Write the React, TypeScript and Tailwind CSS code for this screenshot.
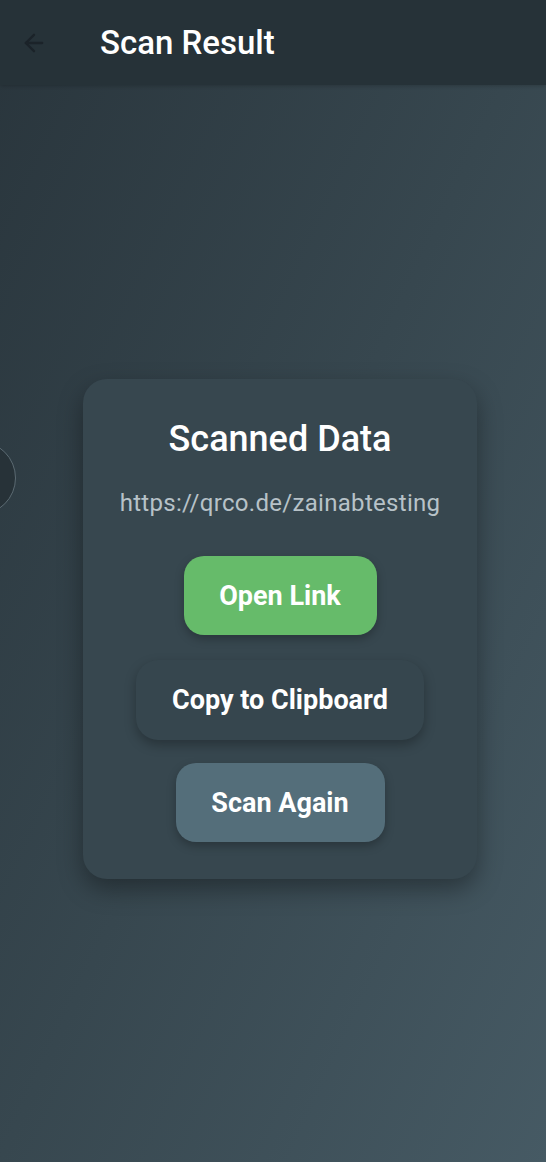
import { ArrowLeft } from "lucide-react";

const App = () => {
  return (
    <div className="relative w-[546px] h-[1162px] overflow-hidden font-['Roboto',sans-serif] bg-gradient-to-br from-[#29353c] via-[#37474f] to-[#465a64]">
      <header className="relative z-10 h-[85px] bg-[#263238] flex items-center shadow-[0_1px_4px_rgba(0,0,0,0.2)]">
        <ArrowLeft className="ml-[20px] w-[28px] h-[28px] text-[#1b2329]" strokeWidth={2} />
        <h1 className="ml-[52px] text-[33px] font-medium text-white leading-[40px]">
          Scan Result
        </h1>
      </header>

      {/* partial circle behind, peeking from the left edge */}
      <div className="absolute left-[-58px] top-[441px] w-[74px] h-[74px] rounded-full bg-[#273238] border border-[#5b6a72]" />

      <div className="flex justify-center pt-[294px] pl-[14px]">
        <div className="w-[394px] h-[500px] rounded-[24px] bg-[#37474f] shadow-[0_10px_24px_rgba(0,0,0,0.35)] flex flex-col items-center pt-[38px]">
          <h2 className="text-[36px] font-medium text-white leading-[44px]">
            Scanned Data
          </h2>
          <p className="mt-[28px] text-[24px] text-[#b7c2c8] leading-[28px] tracking-[0.3px]">
            https://qrco.de/zainabtesting
          </p>
          <button className="mt-[39px] w-[193px] h-[79px] rounded-[20px] bg-[#66bb6a] text-white text-[27px] font-bold pt-[2px] shadow-[0_4px_10px_rgba(0,0,0,0.25)]">
            Open Link
          </button>
          <button className="mt-[25px] w-[288px] h-[80px] rounded-[22px] bg-[#36464e] text-white text-[27px] font-bold shadow-[0_5px_12px_rgba(0,0,0,0.28)]">
            Copy to Clipboard
          </button>
          <button className="mt-[23px] w-[209px] h-[79px] rounded-[20px] bg-[#546e7a] text-white text-[27px] font-bold pt-[2px] shadow-[0_4px_10px_rgba(0,0,0,0.25)]">
            Scan Again
          </button>
        </div>
      </div>
    </div>
  );
};

export default App;
